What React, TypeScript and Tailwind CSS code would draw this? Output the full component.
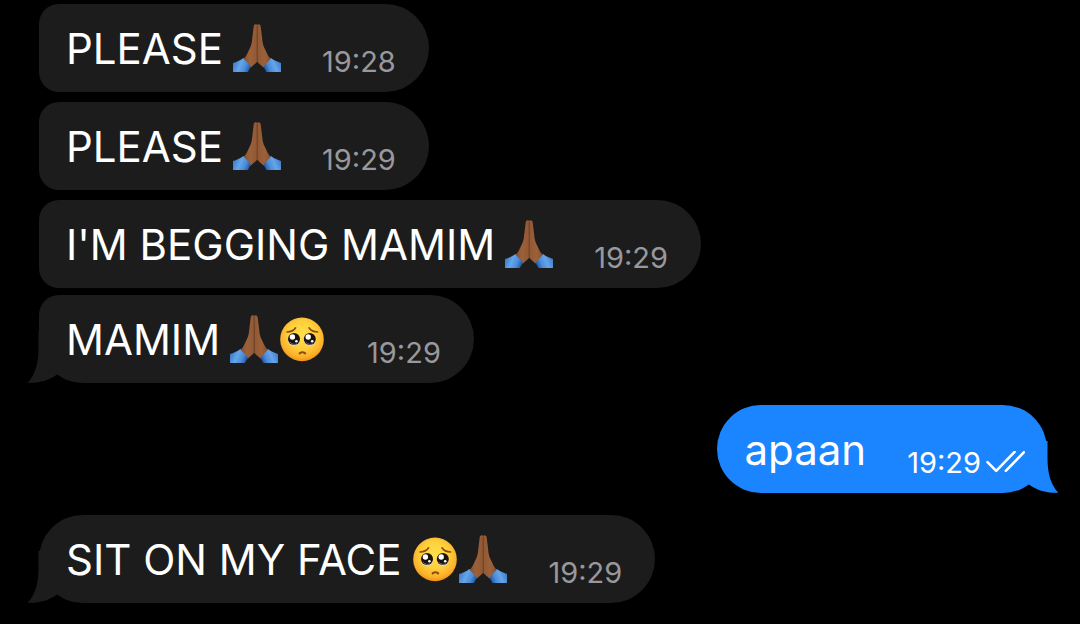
type Emoji = 'pray' | 'pleading';

interface Message {
  id: number;
  text: string;
  emojis: Emoji[];
  time: string;
  sent?: boolean;
  tail?: boolean;
  shape: string;
}

const messages: Message[] = [
  { id: 1, text: 'PLEASE', emojis: ['pray'], time: '19:28', shape: 'mt-1 rounded-l-[20px] rounded-r-[44px]' },
  { id: 2, text: 'PLEASE', emojis: ['pray'], time: '19:29', shape: 'mt-[10px] rounded-l-[20px] rounded-r-[44px]' },
  { id: 3, text: "I'M BEGGING MAMIM", emojis: ['pray'], time: '19:29', shape: 'mt-[10px] rounded-l-[20px] rounded-r-[44px]' },
  { id: 4, text: 'MAMIM', emojis: ['pray', 'pleading'], time: '19:29', tail: true, shape: 'mt-[7px] rounded-[44px] rounded-tl-[20px]' },
  { id: 5, text: 'apaan', emojis: [], time: '19:29', sent: true, tail: true, shape: 'mt-[22px] rounded-[44px]' },
  { id: 6, text: 'SIT ON MY FACE', emojis: ['pleading', 'pray'], time: '19:29', tail: true, shape: 'mt-[22px] rounded-[44px]' },
];

function Pray() {
  return (
    <svg viewBox="0 0 48 48" className="w-12 h-12" role="img" aria-label="folded hands">
      <defs>
        <linearGradient id="hand" x1="0" x2="1">
          <stop offset="0" stopColor="#84502e" />
          <stop offset="0.45" stopColor="#9c613a" />
          <stop offset="1" stopColor="#8f5834" />
        </linearGradient>
        <linearGradient id="cuff" x1="0" y1="0.3" x2="1" y2="0.6">
          <stop offset="0" stopColor="#3a78c4" />
          <stop offset="0.4" stopColor="#65a5ea" />
          <stop offset="0.7" stopColor="#4b8ad6" />
          <stop offset="1" stopColor="#174a8c" />
        </linearGradient>
        <g id="half">
          <path d="M0 39C3.5 38 7 36.6 10.5 34L19 42.6C17 44.2 15.8 46 15 48H0Z" fill="url(#cuff)" />
          <path
            d="M22.8 .2C21.4 .2 20.8 1.2 20.7 2.5L19.2 15C19 19 18 22 16.6 24.8C14.8 28.8 13.4 32 10.6 35C12.6 36.6 16 40 18.2 43.2C20.4 41 22.6 40 24.3 37.6V1.4C24.1 .6 23.6 .2 22.8 .2Z"
            fill="url(#hand)"
          />
        </g>
      </defs>
      <use href="#half" />
      <use href="#half" transform="matrix(-1 0 0 1 48.4 0)" />
      <path d="M24.2 2V37.4" stroke="#633a1f" strokeWidth="0.7" />
    </svg>
  );
}

function Pleading() {
  return (
    <svg viewBox="0 0 48 48" className="w-12 h-12" role="img" aria-label="pleading face">
      <defs>
        <radialGradient id="face" cx="0.5" cy="0.4" r="0.62">
          <stop offset="0" stopColor="#ffe04a" />
          <stop offset="0.5" stopColor="#ffd03c" />
          <stop offset="0.82" stopColor="#fbb02a" />
          <stop offset="1" stopColor="#ee8a14" />
        </radialGradient>
      </defs>
      <circle cx="24" cy="24.4" r="21.8" fill="url(#face)" />
      <g fill="none" stroke="#8a4a0c" strokeWidth="1.6" strokeLinecap="round">
        <path d="M9 17C12.5 17 15.8 15.6 17.6 12.8" />
        <path d="M39.6 17C36.1 17 32.8 15.6 31 12.8" />
        <path d="M21.6 38.4C22.6 36.8 26.2 36.8 27.2 38.4" strokeWidth="2" />
      </g>
      <g id="eye">
        <ellipse cx="16" cy="26.4" rx="5.8" ry="5" fill="#e9cf9c" />
        <circle cx="16" cy="24" r="6" fill="#1c120e" />
        <circle cx="14.4" cy="22" r="2.7" fill="#fff" />
        <circle cx="18.4" cy="26.2" r="1.3" fill="#fff" />
        <path d="M12 27.2C13.6 29.4 17 30 19 28.8" fill="none" stroke="#7d879a" strokeWidth="0.8" />
      </g>
      <use href="#eye" x="15.8" />
    </svg>
  );
}

function Checks() {
  return (
    <svg viewBox="0 0 40 24" className="w-10 h-6" fill="none" stroke="#fff" strokeWidth="2.6" strokeLinecap="round" strokeLinejoin="round" role="img" aria-label="read">
      <path d="M2.5 11.2L11.2 19.8L29.6 .9M20.8 19.8L38.8 1.3" />
    </svg>
  );
}

function Tail({ sent }: { sent?: boolean }) {
  return (
    <svg
      viewBox="0 0 56 52"
      className={`absolute bottom-0 w-14 h-[52px] ${sent ? '-right-3 -scale-x-100 fill-[#1b84ff]' : '-left-3 fill-[#1c1c1c]'}`}
      aria-hidden="true"
    >
      <path d="M11.5 0V17C11.5 33 8 44 .6 51.7C12 52.3 22 49.5 30 43.5L56 20V0Z" />
    </svg>
  );
}

function Bubble({ message }: { message: Message }) {
  const { text, emojis, time, sent, tail, shape } = message;

  return (
    <li
      className={`relative flex items-end text-white ${shape} ${
        sent ? 'self-end bg-[#1b84ff] pl-[27px] pr-[22px]' : 'self-start bg-[#1c1c1c] pl-[27px] pr-[33px]'
      }`}
    >
      {tail && <Tail sent={sent} />}
      <p className="relative flex pt-5 pb-[18px] text-[42px] leading-[50px] whitespace-nowrap">
        <span>{text}</span>
        {emojis.length > 0 && (
          <span className="flex ml-[10px]">
            {emojis.map((emoji) => (emoji === 'pray' ? <Pray key={emoji} /> : <Pleading key={emoji} />))}
          </span>
        )}
      </p>
      <div className="relative flex items-center ml-[41px] pb-[11px]">
        <time className={`text-[29px] leading-[38px] ${sent ? '' : 'text-[#98989d]'}`}>{time}</time>
        {sent && (
          <span className="ml-1">
            <Checks />
          </span>
        )}
      </div>
    </li>
  );
}

export default function App() {
  return (
    <main className="min-h-screen bg-black font-['Inter',sans-serif]">
      <ul className="flex flex-col pl-[39px] pr-[33px]">
        {messages.map((message) => (
          <Bubble key={message.id} message={message} />
        ))}
      </ul>
    </main>
  );
}
